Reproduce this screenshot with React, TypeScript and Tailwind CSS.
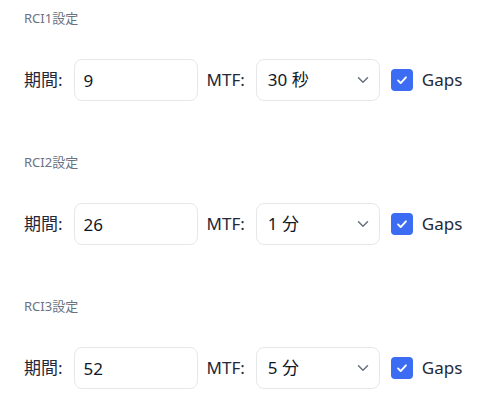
import { ChevronDown } from 'lucide-react'

interface RciSetting {
  name: string;
  period: string;
  mtf: string;
}

const settings: RciSetting[] = [
  { name: 'RCI1設定', period: '9', mtf: '30 秒' },
  { name: 'RCI2設定', period: '26', mtf: '1 分' },
  { name: 'RCI3設定', period: '52', mtf: '5 分' },
]

const mtfOptions = ['30 秒', '1 分', '5 分', '15 分', '1 時間']

function SettingRow({ setting }: { setting: RciSetting }) {
  return (
    <div className="flex items-center whitespace-nowrap text-[17px] text-gray-800">
      <span className="shrink-0">期間:</span>
      <input
        type="text"
        defaultValue={setting.period}
        className="shrink-0 ml-[11px] w-[124px] h-[42px] px-[9px] rounded-lg border border-gray-200 text-gray-900 outline-none"
      />
      <span className="shrink-0 ml-[9px]">MTF:</span>
      <div className="relative shrink-0 ml-[11px] w-[124px] h-[42px]">
        <select
          defaultValue={setting.mtf}
          className="w-full h-full appearance-none px-[11px] rounded-lg border border-gray-200 bg-white text-gray-900 outline-none"
        >
          {mtfOptions.map((opt) => (
            <option key={opt} value={opt}>
              {opt}
            </option>
          ))}
        </select>
        <ChevronDown
          className="absolute right-[8px] top-1/2 -translate-y-1/2 w-[18px] h-[18px] text-gray-500 pointer-events-none"
          strokeWidth={2}
        />
      </div>
      <label className="shrink-0 flex items-center gap-[9px] ml-[11px]">
        <span className="w-[22px] h-[22px] rounded-[4px] bg-[#3b6cf2] flex items-center justify-center">
          <svg viewBox="0 0 16 16" className="w-[14px] h-[14px]" fill="none">
            <path d="M3.5 8.5l3 3 6-6.5" stroke="white" strokeWidth="2.2" strokeLinecap="round" strokeLinejoin="round" />
          </svg>
        </span>
        <span>Gaps</span>
      </label>
    </div>
  )
}

export default function App() {
  return (
    <div
      className="w-[480px] h-[415px] overflow-hidden bg-white pl-6 pt-[10px] flex flex-col gap-[53px]"
      style={{ fontFamily: '"Noto Sans", "Noto Sans CJK JP", sans-serif' }}
    >
      {settings.map((s) => (
        <div key={s.name}>
          <div className="text-[13px] leading-4 text-gray-500">{s.name}</div>
          <div className="mt-[33px]">
            <SettingRow setting={s} />
          </div>
        </div>
      ))}
    </div>
  )
}
